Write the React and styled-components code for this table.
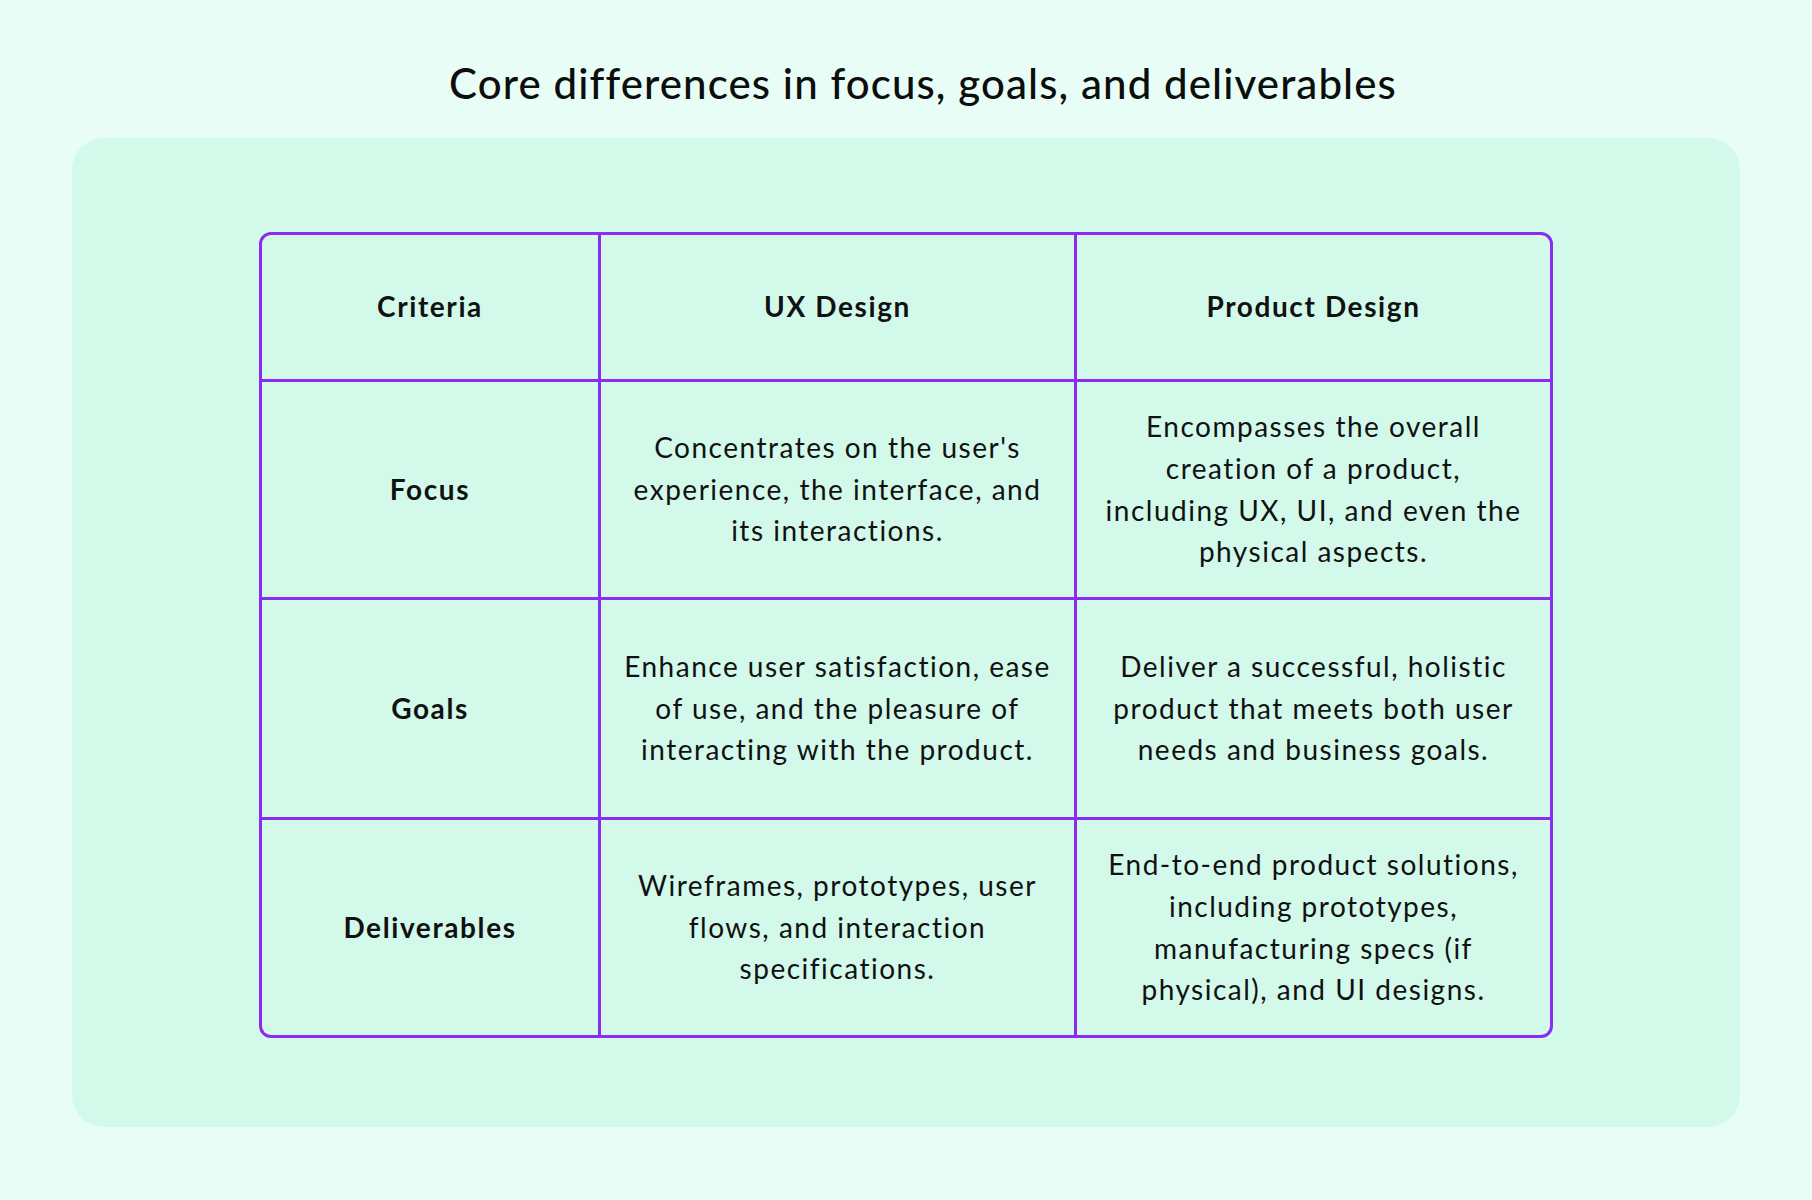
import React from "react"
import styled, { createGlobalStyle } from "styled-components"

const GlobalStyle = createGlobalStyle`
  html, body {
    margin: 0;
    padding: 0;
    background: #e8fdf6;
  }
  body {
    font-family: Lato, "Noto Sans", sans-serif;
    color: #111;
  }
`

const Page = styled.div`
  width: 1812px;
  height: 1200px;
  box-sizing: border-box;
  padding: 59px 72px 0;
  background: #e8fdf6;
`

const Title = styled.h1`
  margin: 0 0 31px;
  padding-left: 34px;
  height: 48px;
  font-size: 42px;
  line-height: 48px;
  font-weight: 500;
  text-align: center;
  letter-spacing: 1.1px;
  color: #0d0d0d;
`

const Card = styled.div`
  box-sizing: border-box;
  height: 989px;
  padding: 94px 187px 0;
  background: #d3f9eb;
  border-radius: 32px;
`

const Table = styled.div`
  display: grid;
  grid-template-columns: 336px 1fr 1fr;
  grid-template-rows: 144px 215px 217px 215px;
  gap: 3px;
  background: #8a2cf2;
  border: 3px solid #8a2cf2;
  border-radius: 12px;
  overflow: hidden;
`

const Cell = styled.div`
  display: flex;
  align-items: center;
  justify-content: center;
  padding: 0 6px;
  background: #d3f9eb;
  text-align: center;
  white-space: pre;
  font-size: 28px;
  line-height: 41.6px;
  letter-spacing: ${(p) => (p.$bold ? "1.6px" : "1.5px")};
  font-weight: ${(p) => (p.$bold ? 700 : 400)};
  color: #111;
`

const headers = ["Criteria", "UX Design", "Product Design"]

const rows = [
  {
    label: "Focus",
    ux: "Concentrates on the user's\nexperience, the interface, and\nits interactions.",
    product:
      "Encompasses the overall\ncreation of a product,\nincluding UX, UI, and even the\nphysical aspects.",
  },
  {
    label: "Goals",
    ux: "Enhance user satisfaction, ease\nof use, and the pleasure of\ninteracting with the product.",
    product:
      "Deliver a successful, holistic\nproduct that meets both user\nneeds and business goals.",
  },
  {
    label: "Deliverables",
    ux: "Wireframes, prototypes, user\nflows, and interaction\nspecifications.",
    product:
      "End-to-end product solutions,\nincluding prototypes,\nmanufacturing specs (if\nphysical), and UI designs.",
  },
]

const App = () => {
  return (
    <Page>
      <GlobalStyle />
      <Title>Core differences in focus, goals, and deliverables</Title>
      <Card>
        <Table>
          {headers.map((h) => (
            <Cell key={h} $bold>
              {h}
            </Cell>
          ))}
          {rows.map((r) => (
            <React.Fragment key={r.label}>
              <Cell $bold>{r.label}</Cell>
              <Cell>{r.ux}</Cell>
              <Cell>{r.product}</Cell>
            </React.Fragment>
          ))}
        </Table>
      </Card>
    </Page>
  )
}

export default App
